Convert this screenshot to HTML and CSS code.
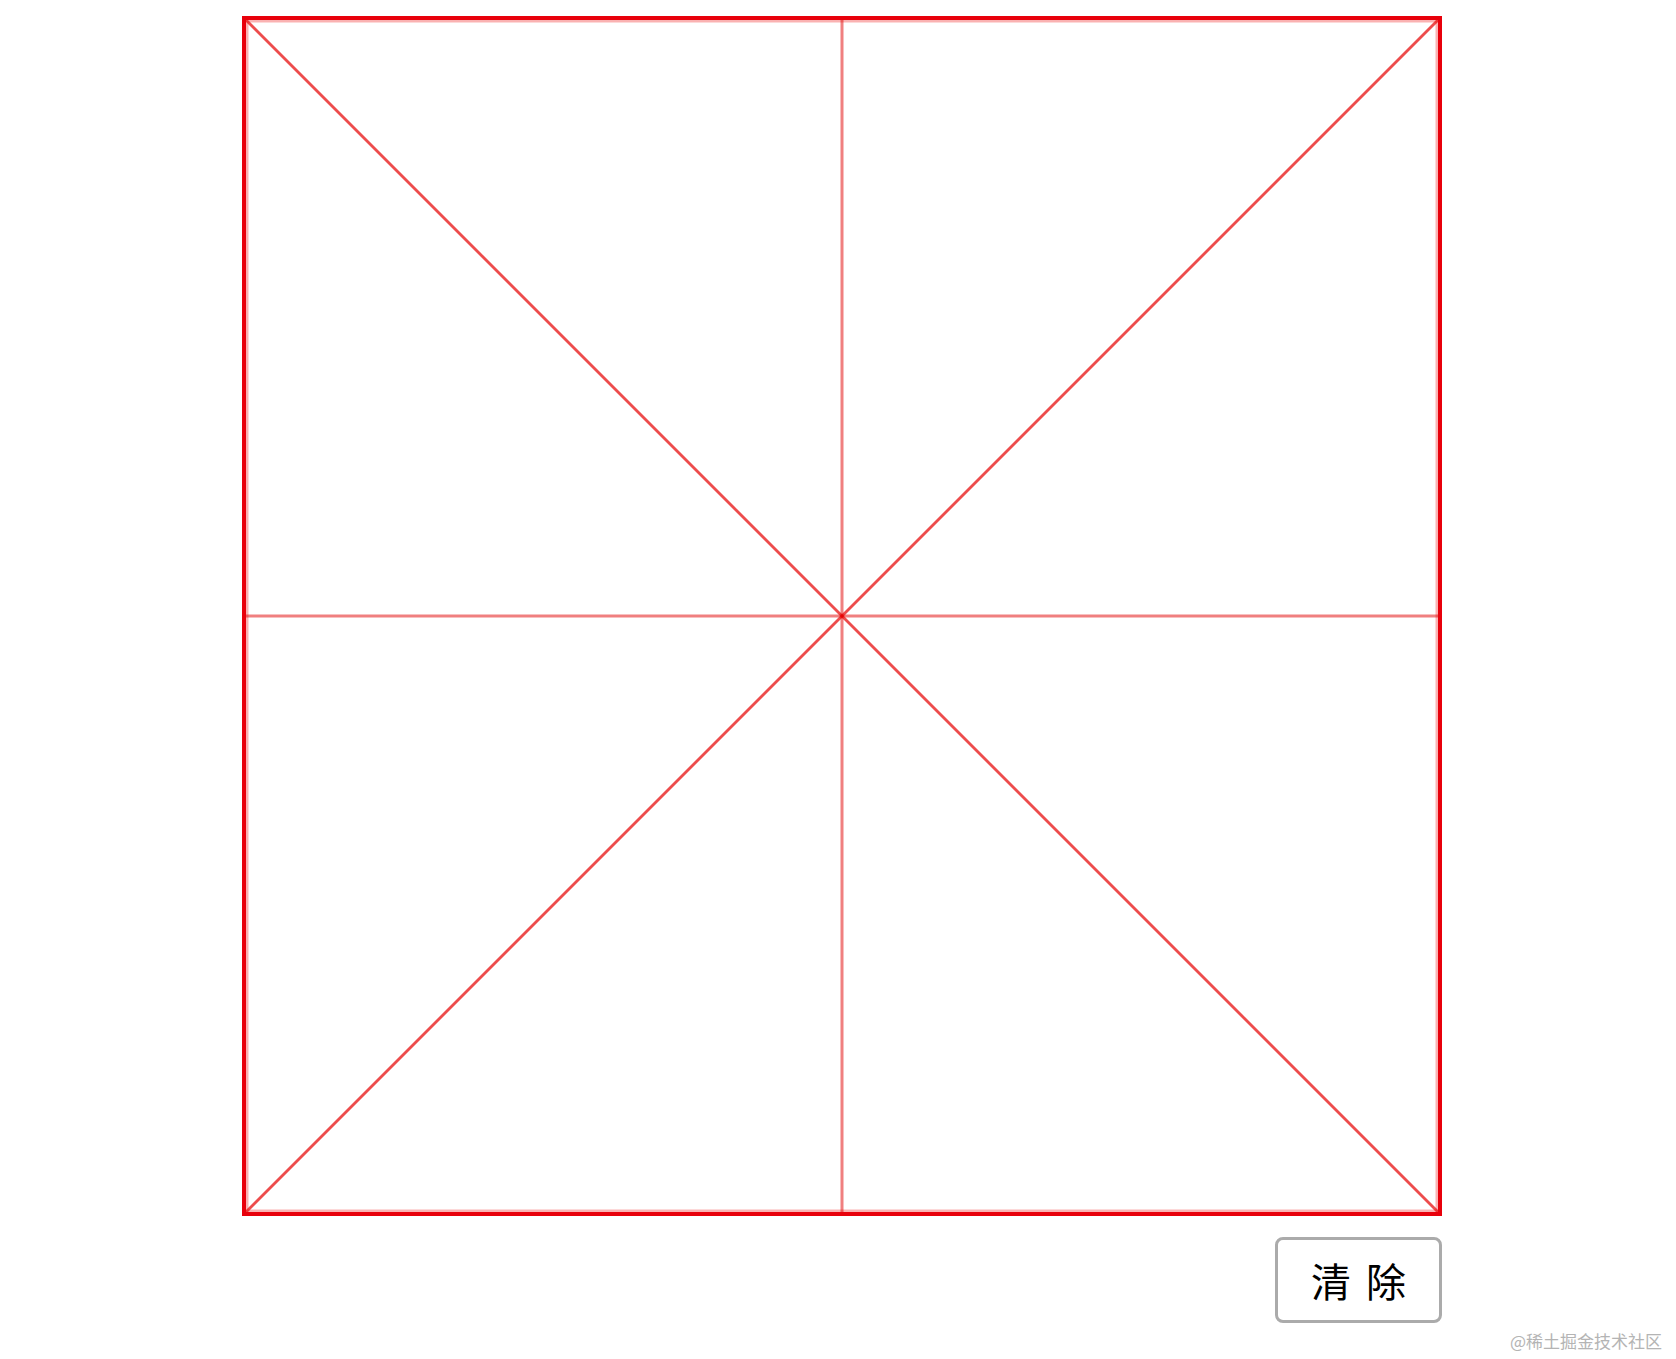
FILE: index.html
```html
<!DOCTYPE html>
<html lang="zh">
<head>
<meta charset="utf-8">
<title>米字格</title>
<link rel="stylesheet" href="styles.css">
</head>
<body>
<main class="page">
  <div class="board">
    <svg class="grid" viewBox="0 0 1192 1192" width="1192" height="1192" xmlns="http://www.w3.org/2000/svg">
      <rect x="1" y="1" width="1190" height="1190" fill="none" stroke="rgba(240,0,0,0.3)" stroke-width="3"/>
      <line x1="596" y1="0" x2="596" y2="1192" stroke="rgba(225,0,0,0.5)" stroke-width="3"/>
      <line x1="0" y1="596" x2="1192" y2="596" stroke="rgba(225,0,0,0.5)" stroke-width="3"/>
      <line x1="0" y1="0" x2="1192" y2="1192" stroke="rgba(230,0,0,0.7)" stroke-width="2.8"/>
      <line x1="1192" y1="0" x2="0" y2="1192" stroke="rgba(230,0,0,0.7)" stroke-width="2.8"/>
    </svg>
  </div>
  <div class="actions">
    <button class="clear-btn" type="button">清 除</button>
  </div>
</main>
<div class="watermark">@稀土掘金技术社区</div>
</body>
</html>
```
FILE: styles.css
```css
html, body {
  margin: 0;
  padding: 0;
  background: #ffffff;
}
body {
  font-family: "Noto Sans CJK SC", "Liberation Sans", sans-serif;
  width: 1676px;
  height: 1359px;
  overflow: hidden;
  position: relative;
}
.page {
  display: flex;
  flex-direction: column;
  width: 1200px;
  margin: 16px 0 0 242px;
}
.board {
  width: 1192px;
  height: 1192px;
  border: 4px solid #e8000b;
}
.grid {
  display: block;
}
.actions {
  display: flex;
  justify-content: flex-end;
  margin-top: 21px;
}
.clear-btn {
  width: 167px;
  height: 86px;
  box-sizing: border-box;
  border: 3px solid #ababab;
  border-radius: 8px;
  background: #ffffff;
  color: #000000;
  font-family: "Noto Sans CJK SC", sans-serif;
  font-size: 40px;
  line-height: 1;
  padding: 0;
  letter-spacing: 3px;
  text-indent: 3px;
}
.watermark {
  position: absolute;
  right: 14px;
  bottom: 6px;
  font-size: 17px;
  color: #b4b4b4;
  font-family: "Noto Sans CJK SC", sans-serif;
}
```
